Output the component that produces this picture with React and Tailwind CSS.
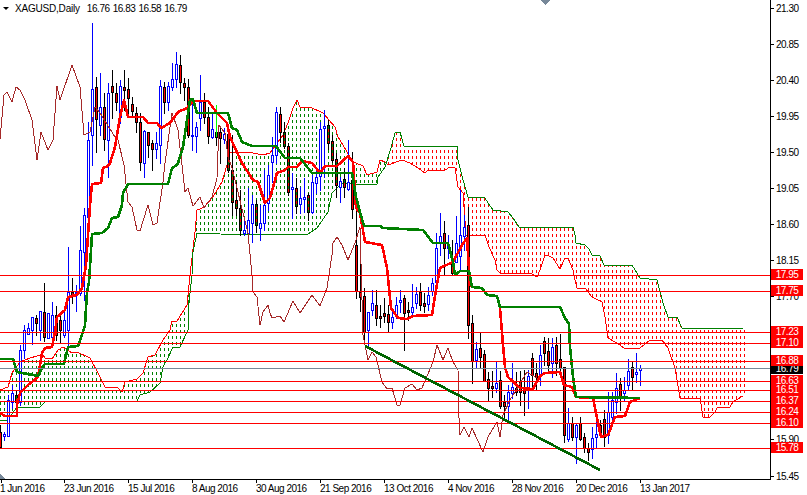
import React from "react";

// x, high, bodyTop, bodyBottom, low, up
const candles = [
  [0,425,432,447,447,0],[4,432,434,436,440,1],[8,395,400,436,436,1],[12,385,393,402,408,1],[16,390,395,402,412,0],
  [20,345,350,402,405,1],[24,325,330,350,358,1],[28,323,328,334,334,1],[32,317,317,330,344,1],[36,315,318,323,335,0],
  [40,311,311,330,340,1],[44,283,312,337,341,0],[48,313,313,338,338,1],[52,302,315,337,337,1],[56,306,315,335,340,0],
  [60,312,320,330,343,0],[64,308,320,335,337,1],[68,247,292,330,345,1],[72,278,292,295,303,0],[76,285,292,295,311,1],
  [80,226,250,293,295,1],[84,208,215,252,300,1],[88,122,140,217,220,1],[92,23,89,135,165,1],[96,77,87,119,152,0],
  [100,73,107,125,135,1],[104,93,107,139,150,0],[108,83,93,140,177,1],[112,70,86,92,118,0],[116,83,93,102,110,0],
  [120,80,86,117,123,1],[124,70,87,90,110,0],[128,78,89,98,117,0],[132,97,104,111,115,0],[136,107,113,122,132,0],
  [140,113,122,162,170,0],[144,130,131,163,177,1],[148,132,132,145,157,0],[152,140,143,149,170,0],[156,132,143,149,158,1],
  [160,80,86,145,163,1],[164,82,87,102,113,0],[168,82,86,102,110,1],[172,63,79,87,90,1],[176,52,64,79,87,1],
  [180,55,65,82,93,0],[184,78,83,87,100,0],[188,79,87,135,137,0],[192,100,135,136,150,1],[196,122,127,136,152,1],
  [200,75,102,118,130,1],[204,93,102,117,123,0],[208,107,117,136,143,0],[212,113,129,137,138,1],[216,115,132,137,145,0],
  [220,128,132,138,163,0],[224,128,134,139,143,1],[228,128,134,170,172,0],[232,135,170,202,215,0],[236,182,200,208,215,0],
  [240,190,208,230,235,0],[244,218,230,233,235,1],[248,188,220,233,233,1],[252,195,204,223,242,1],[256,200,204,225,232,0],
  [260,205,223,228,240,1],[264,170,205,223,230,1],[268,165,175,203,210,1],[272,137,155,162,182,1],[276,107,112,155,163,1],
  [280,107,114,132,142,0],[284,122,132,146,148,0],[288,143,146,192,195,0],[292,173,187,189,218,1],[296,178,188,206,213,0],
  [300,187,198,204,213,1],[304,178,197,199,212,1],[308,193,195,212,220,0],[312,175,182,212,213,1],[316,170,177,183,193,1],
  [320,122,129,176,190,1],[324,110,126,128,177,1],[328,120,125,143,149,0],[332,135,141,160,162,0],[336,153,159,185,197,0],
  [340,177,181,187,202,1],[344,168,179,187,197,0],[348,140,182,189,190,1],[352,152,180,209,218,0],[356,207,245,291,298,0],
  [360,255,292,297,311,0],[364,288,296,332,342,0],[368,312,312,330,347,1],[372,290,303,310,315,1],[376,290,305,318,325,0],
  [380,305,316,318,327,0],[384,298,313,316,322,0],[388,305,314,322,331,0],[392,312,317,322,328,1],[396,297,305,316,318,1],
  [400,290,300,302,312,1],[404,295,298,313,350,0],[408,302,310,312,320,0],[412,284,307,312,315,1],[416,287,294,303,308,1],
  [420,283,292,305,310,0],[424,293,303,306,312,0],[428,287,295,304,310,1],[432,278,283,291,295,1],[436,233,248,282,290,1],
  [440,213,236,243,255,1],[444,221,233,248,275,0],[448,235,245,248,258,1],[452,240,258,273,275,0],[456,216,243,262,262,1],
  [460,190,235,256,270,1],[464,215,227,236,250,1],[468,207,225,325,338,0],[472,315,323,361,383,0],[476,342,349,360,368,1],
  [480,333,348,357,367,0],[484,350,354,381,381,0],[488,372,379,388,400,0],[492,371,386,388,397,0],[496,362,383,388,392,1],
  [500,371,380,406,408,0],[504,395,402,406,417,0],[508,385,392,406,422,1],[512,363,387,393,398,1],[516,372,388,392,395,0],
  [520,371,382,392,405,0],[524,370,388,393,415,0],[528,370,376,387,408,1],[532,353,358,375,387,0],[536,363,373,377,389,0],
  [540,345,355,375,385,1],[544,337,341,353,365,0],[548,338,351,365,370,0],[552,338,347,363,377,1],[556,337,345,363,375,0],
  [560,334,359,368,377,0],[564,367,367,435,442,0],[568,408,423,439,441,1],[572,417,423,437,440,0],[576,423,425,437,463,1],
  [580,417,423,439,440,0],[584,433,437,448,452,0],[588,443,448,452,460,0],[592,427,438,449,458,1],[596,417,434,437,447,1],
  [600,420,425,435,437,0],[604,410,419,437,446,0],[608,392,412,435,443,1],[612,392,400,417,420,1],[616,373,388,402,413,1],
  [620,378,384,397,410,0],[624,377,390,393,400,1],[628,359,371,385,390,1],[632,362,367,377,390,0],[636,353,372,374,382,1],
  [640,365,368,370,385,1],
];

const tenkan = [[0,413],[5,416],[17,416],[17,405],[20,393],[28,385],[38,377],[42,353],[45,348],[52,347],[55,332],[57,317],[65,310],[68,297],[77,295],[82,288],[86,265],[90,205],[92,184],[101,183],[103,168],[108,166],[110,163],[115,147],[120,117],[124,100],[128,117],[143,117],[148,123],[157,123],[161,128],[170,123],[178,112],[187,108],[193,101],[208,101],[217,113],[227,123],[230,137],[242,163],[253,180],[258,182],[265,203],[270,198],[277,173],[285,170],[288,167],[297,167],[302,161],[312,163],[320,173],[325,166],[337,166],[348,156],[353,162],[356,208],[360,213],[365,242],[382,245],[387,268],[391,308],[398,318],[407,319],[413,316],[432,315],[436,290],[440,268],[453,262],[462,245],[467,238],[470,285],[472,287],[482,288],[487,295],[497,296],[500,308],[503,345],[505,367],[508,377],[520,388],[533,389],[540,376],[545,373],[560,372],[564,385],[572,387],[576,397],[593,398],[598,423],[601,437],[608,435],[615,417],[625,416],[630,402],[640,398]];

const kijun = [[0,359],[13,359],[17,372],[38,376],[42,368],[45,364],[64,364],[68,347],[78,346],[83,332],[85,325],[87,292],[89,282],[92,234],[102,233],[108,228],[112,218],[118,217],[122,205],[123,193],[128,184],[168,184],[172,168],[177,165],[178,163],[183,147],[190,100],[193,99],[197,113],[228,113],[232,128],[237,130],[242,142],[252,146],[276,146],[281,153],[285,158],[300,158],[312,173],[352,173],[356,197],[360,212],[364,226],[380,226],[383,228],[423,230],[433,243],[448,243],[453,262],[455,275],[460,271],[469,271],[472,287],[482,288],[487,295],[497,296],[500,307],[560,307],[565,318],[569,324],[570,347],[573,377],[576,397],[640,398]];

const chikou = [[0,139],[4,95],[7,92],[12,102],[16,87],[20,90],[25,100],[32,120],[37,160],[41,132],[48,150],[53,140],[57,86],[60,100],[72,65],[80,87],[84,135],[90,132],[95,107],[100,113],[115,137],[118,140],[124,165],[128,202],[132,207],[137,230],[140,231],[148,205],[153,225],[157,223],[163,182],[165,163],[172,113],[178,130],[182,165],[185,192],[188,188],[193,206],[200,197],[204,208],[212,197],[217,178],[219,125],[225,133],[228,157],[232,168],[248,233],[252,275],[253,292],[257,297],[260,325],[263,312],[268,305],[270,313],[272,318],[280,316],[284,322],[293,301],[300,313],[312,295],[320,306],[327,288],[332,255],[333,243],[337,237],[342,245],[348,260],[355,243],[360,227],[363,335],[368,360],[372,352],[376,357],[382,382],[387,389],[392,388],[397,405],[400,405],[405,388],[412,384],[417,390],[422,388],[433,362],[437,345],[443,360],[448,348],[453,362],[458,370],[459,418],[460,435],[464,427],[469,437],[472,428],[483,452],[488,437],[497,422],[500,437],[503,415],[510,400],[527,372],[537,378]];

const senkouA = [[0,390],[8,387],[12,373],[20,362],[30,358],[37,356],[43,355],[45,358],[52,359],[58,350],[63,347],[72,353],[77,352],[90,358],[98,373],[105,387],[117,387],[122,392],[125,382],[137,379],[143,373],[148,357],[155,355],[163,340],[170,330],[172,321],[177,321],[187,305],[190,275],[195,232],[197,210],[200,209],[204,207],[213,197],[222,182],[227,165],[230,152],[247,152],[253,153],[263,155],[270,153],[283,135],[288,123],[293,108],[297,100],[300,107],[310,107],[323,113],[335,127],[338,137],[343,145],[353,162],[356,163],[363,166],[367,175],[377,172],[380,160],[385,162],[388,165],[402,160],[410,163],[418,168],[425,173],[428,170],[445,170],[450,167],[455,168],[458,187],[463,193],[466,235],[485,235],[489,247],[495,260],[497,270],[500,273],[515,274],[530,273],[537,277],[540,270],[545,255],[547,255],[553,258],[560,269],[565,258],[568,258],[573,270],[575,280],[577,288],[585,288],[592,297],[602,302],[605,317],[608,338],[620,345],[625,349],[640,348],[650,340],[662,340],[668,348],[675,368],[677,380],[680,398],[700,398],[703,417],[710,417],[715,412],[717,408],[730,407],[733,402],[743,396]];

const senkouB = [[0,420],[8,420],[17,407],[35,407],[40,407],[45,402],[50,401],[137,401],[140,395],[150,392],[160,383],[163,367],[168,358],[173,347],[180,347],[188,330],[188,312],[192,275],[193,252],[197,233],[220,234],[272,235],[308,234],[317,228],[328,212],[332,193],[342,183],[355,184],[377,184],[378,177],[385,167],[391,148],[395,133],[400,132],[404,146],[457,146],[458,160],[463,180],[468,197],[485,198],[488,203],[493,210],[508,212],[513,218],[519,227],[573,227],[575,235],[576,243],[585,245],[589,249],[592,255],[600,256],[604,265],[632,265],[640,278],[657,280],[663,303],[668,317],[677,317],[682,328],[743,328]];

const levels = [275, 291, 332, 343, 361, 381, 390, 401, 412, 423, 448];

const axisPrices = [
  ["21.30", 8], ["20.85", 44], ["20.40", 80], ["19.95", 116], ["19.50", 152], ["19.05", 188], ["18.60", 224],
  ["18.15", 260], ["17.70", 296], ["15.90", 439], ["15.45", 476],
];

const redPrices = [
  ["17.95", 275], ["17.75", 291], ["17.23", 332], ["17.10", 343], ["16.88", 361], ["16.63", 381],
  ["16.51", 390], ["16.37", 401], ["16.24", 412], ["16.10", 423], ["15.78", 448],
];

const dates = ["1 Jun 2016", "23 Jun 2016", "15 Jul 2016", "8 Aug 2016", "30 Aug 2016", "21 Sep 2016", "13 Oct 2016", "4 Nov 2016", "28 Nov 2016", "20 Dec 2016", "13 Jan 2017"];

const pts = (line) => line.map((p) => p.join(",")).join(" ");

function valueAt(line, x) {
  for (let i = 1; i < line.length; i++) {
    if (x <= line[i][0]) {
      const [x0, y0] = line[i - 1];
      const [x1, y1] = line[i];
      if (x1 === x0) return y1;
      return y0 + ((y1 - y0) * (x - x0)) / (x1 - x0);
    }
  }
  return line[line.length - 1][1];
}

const PERIOD = 6;

function cloudAt(x) {
  const a = Math.round(valueAt(senkouA, x));
  const b = Math.round(valueAt(senkouB, x));
  return { top: Math.min(a, b), bottom: Math.max(a, b), color: a < b ? "#008000" : "#ff0000" };
}

function CloudColumn({ x, from, to, color }) {
  if (to <= from) return null;
  return (
    <line x1={x + 0.5} x2={x + 0.5} y1={from} y2={to} stroke={color} strokeDasharray="3 3" strokeDashoffset={from % PERIOD} />
  );
}

function Candle({ c }) {
  const [x, h, t, b, l, up] = c;
  const color = up ? "#0000ff" : "#000000";
  const cloud = cloudAt(x);
  return (
    <g>
      <line x1={x + 0.5} x2={x + 0.5} y1={h} y2={l + 1} stroke={color} />
      <rect x={x - 0.5} y={t + 0.5} width={2} height={Math.max(b - t, 1)} fill={up ? "#ffffff" : "#ff0000"} stroke={color} />
      {!up && x <= 744 && (
        <CloudColumn x={x} from={Math.max(t + 1, cloud.top)} to={Math.min(b, cloud.bottom)} color={cloud.color} />
      )}
    </g>
  );
}

function Chart() {
  const columns = [];
  for (let x = 0; x <= 744; x += 4) columns.push(x);
  return (
    <svg width="771" height="479" shapeRendering="crispEdges" className="block">
      {columns.map((x) => {
        const c = cloudAt(x);
        return <CloudColumn key={x} x={x} from={c.top} to={c.bottom} color={c.color} />;
      })}
      <polyline points={pts(senkouA)} fill="none" stroke="#ff0000" />
      <polyline points={pts(senkouB)} fill="none" stroke="#008000" />
      {candles.map((c) => (
        <Candle key={c[0]} c={c} />
      ))}
      <line x1="216.5" x2="216.5" y1="105" y2="137" stroke="#00ff00" />
      <polyline points={pts(chikou)} fill="none" stroke="#a52a2a" />
      <polyline points={pts(tenkan)} fill="none" stroke="#ff0000" strokeWidth="2.6" strokeLinejoin="round" />
      <polyline points={pts(kijun)} fill="none" stroke="#008000" strokeWidth="2.6" strokeLinejoin="round" />
      {levels.map((y) => (
        <line key={y} x1="0" x2="771" y1={y + 0.5} y2={y + 0.5} stroke="#ff0000" />
      ))}
      <line x1="0" x2="771" y1="368.5" y2="368.5" stroke="#778899" />
      <line x1="365" y1="346" x2="600" y2="470" stroke="#006400" strokeWidth="2.6" />
      <polygon points="540,0 550,0 545,5" fill="#778899" />
      <polygon points="0,474 0,479 5,479" fill="#778899" />
    </svg>
  );
}

function PriceAxis() {
  return (
    <div className="relative w-9 h-[479px] border-l border-black">
      {axisPrices.map(([label, y]) => (
        <div key={label} className="absolute left-0 flex items-center h-3" style={{ top: y - 6 }}>
          <div className="w-[3px] h-px bg-black" />
          <span className="ml-[2px] text-black tracking-[-0.5px]">{label}</span>
        </div>
      ))}
      <div className="absolute left-0 top-[363px] w-8 h-[11px] leading-[11px] bg-black text-white text-center tracking-[-0.5px]">
        16.79
      </div>
      {redPrices.map(([label, y]) => (
        <div key={label} className="absolute left-0 w-8 h-[11px] leading-[11px] bg-[#ff0000] text-white text-center tracking-[-0.5px]" style={{ top: y - 6 }}>
          {label}
        </div>
      ))}
    </div>
  );
}

export default function App() {
  return (
    <div className="w-[807px] h-[495px] bg-white overflow-hidden font-['Liberation_Sans',sans-serif] text-[10px] text-black">
      <div className="flex">
        <div className="relative w-[770px] h-[479px] overflow-hidden">
          <Chart />
          <div className="absolute left-[3px] top-[2px] flex items-center h-3">
            <svg width="6" height="3" className="mr-[6px]">
              <polygon points="0,0 6,0 3,3" fill="#000" />
            </svg>
            <span className="tracking-[-0.2px]">XAGUSD,Daily</span>
            <div className="flex gap-[3px] ml-[7px] tracking-[-0.45px]">
              <span>16.76</span>
              <span>16.83</span>
              <span>16.58</span>
              <span>16.79</span>
            </div>
          </div>
        </div>
        <PriceAxis />
      </div>
      <div className="flex h-4 border-t border-black w-[771px]">
        {dates.map((d, i) => (
          <div key={d} className="w-[64px]">
            <div className={i === 0 ? "ml-px w-px h-[3px] bg-black" : "w-px h-[3px] bg-black"} />
            <div className="whitespace-nowrap tracking-[-0.5px] leading-[12px]">{d}</div>
          </div>
        ))}
      </div>
    </div>
  );
}
